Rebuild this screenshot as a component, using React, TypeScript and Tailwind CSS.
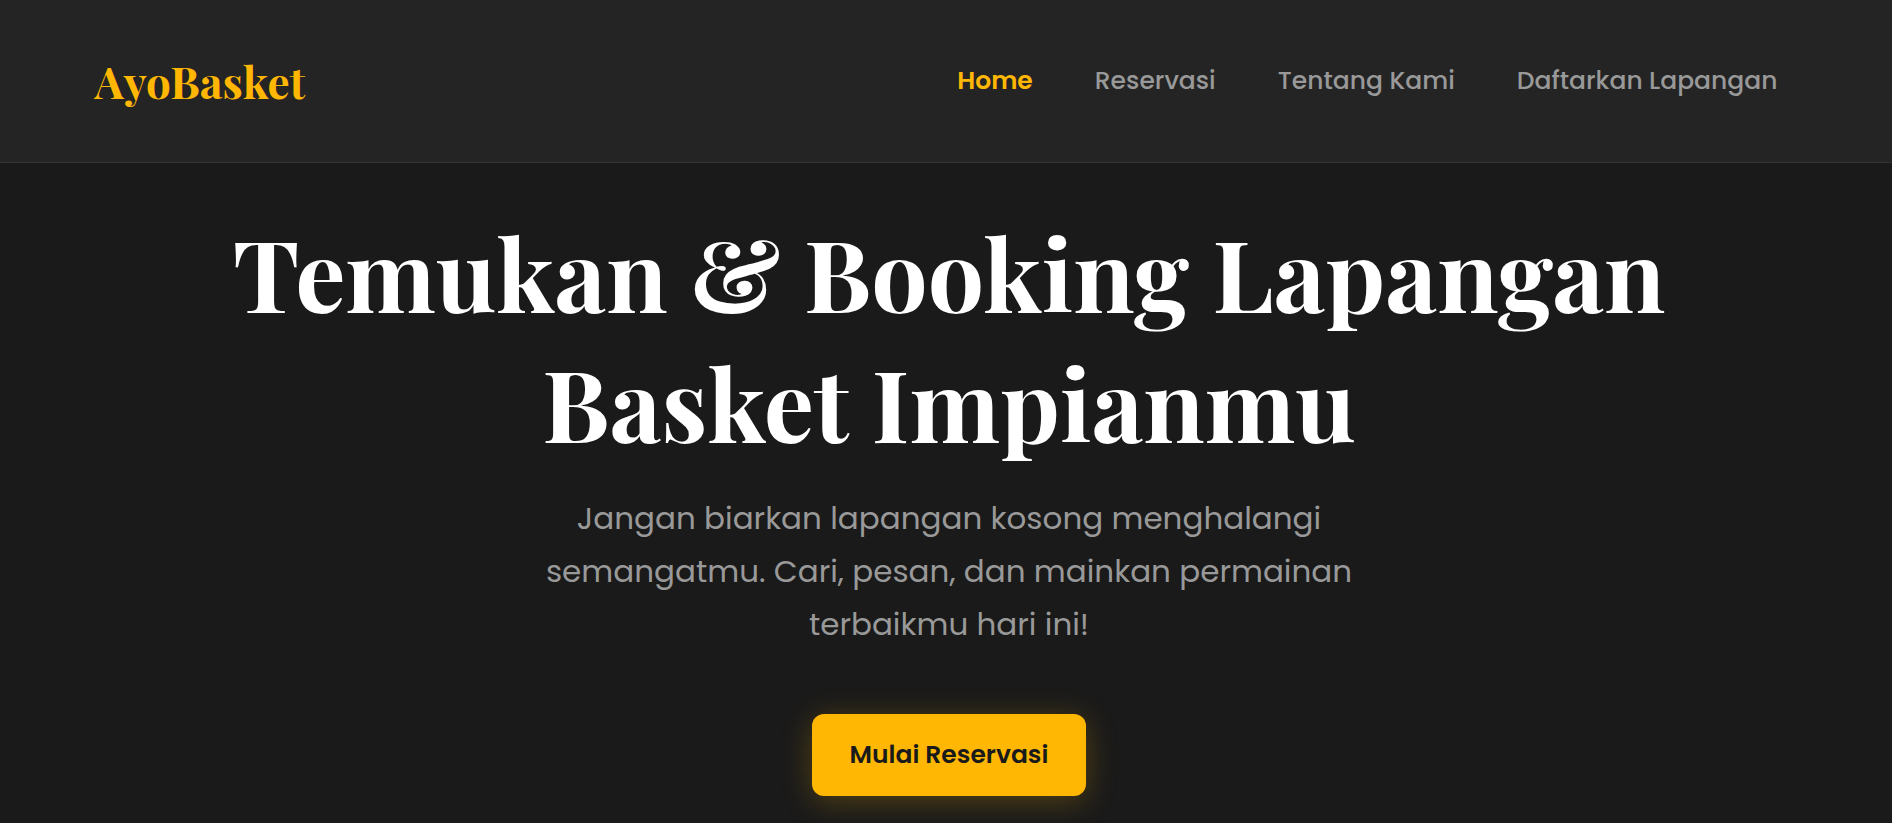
const links = ["Home", "Reservasi", "Tentang Kami", "Daftarkan Lapangan"];

export default function App() {
  return (
    <div className="min-h-screen overflow-x-hidden bg-[#1a1a1a] font-['Poppins','Inter',sans-serif] text-[#999999]">
      <header className="flex items-center justify-between border-b border-[#333333] bg-[#242424] px-[5%] py-12">
        <a href="#" className="font-['Playfair_Display','Liberation_Serif',serif] text-[44px] leading-[66px] font-bold text-[#ffb703]">
          AyoBasket
        </a>
        <nav className="mr-5 flex gap-[62px] text-[25px] leading-10">
          {links.map((link, i) => (
            <a key={link} href="#" className={i === 0 ? "font-semibold text-[#ffb703]" : "font-medium"}>
              {link}
            </a>
          ))}
        </nav>
      </header>
      <main className="flex flex-col items-center pt-11 pr-[94px] pb-6 pl-[100px] text-center">
        <h1 className="font-['Playfair_Display','Liberation_Serif',serif] text-[100px] leading-[130px] font-bold text-white">
          Temukan &amp; Booking Lapangan
          <br />
          Basket Impianmu
        </h1>
        <p className="mt-[25px] max-w-[840px] text-[31px] leading-[53px]">
          Jangan biarkan lapangan kosong menghalangi semangatmu. Cari, pesan, dan mainkan permainan terbaikmu hari ini!
        </p>
        <button className="mt-[63px] rounded-xl bg-[#ffb703] px-[38px] py-5 text-[25px] leading-[42px] font-semibold text-[#1a1a1a] shadow-[0_5px_31px_rgba(255,183,3,0.25)]">
          Mulai Reservasi
        </button>
      </main>
    </div>
  );
}
